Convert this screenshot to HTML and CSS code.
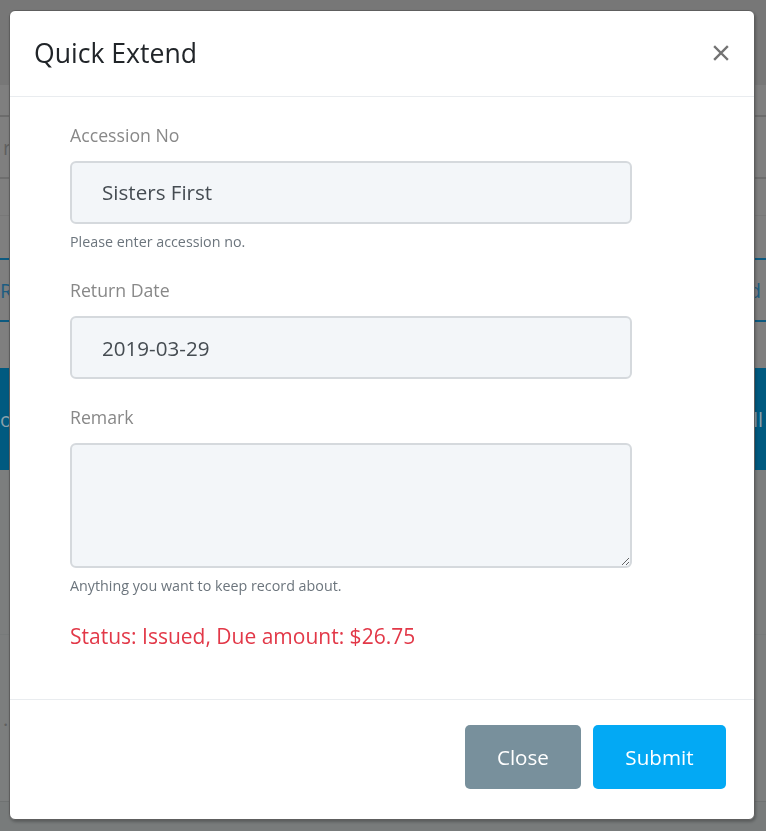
FILE: index.html
```html
<!DOCTYPE html>
<html lang="en">
<head>
<meta charset="utf-8">
<title>Quick Extend</title>
<link rel="stylesheet" href="styles.css">
</head>
<body>
<div class="backdrop">
  <div class="bd-nav"></div>
  <div class="bd-row bd-r1"></div>
  <div class="bd-row bd-r2"><span class="bd-txt">r</span></div>
  <div class="bd-row bd-r3"></div>
  <div class="bd-gap bd-g1"></div>
  <div class="bd-tabs"><span>Re</span><span>d</span></div>
  <div class="bd-gap bd-g2"></div>
  <div class="bd-bar"><span>o</span><span>ll</span></div>
  <div class="bd-gap bd-g3"></div>
  <div class="bd-row bd-r4"><span class="bd-txt">.</span></div>
  <div class="bd-foot"></div>
</div>

<div class="modal" role="dialog" aria-labelledby="modal-title">
  <div class="modal-header">
    <h5 class="modal-title" id="modal-title">Quick Extend</h5>
    <button class="close-x" type="button" aria-label="Close">
      <svg width="16" height="16" viewBox="0 0 16 16"><path d="M2 2 L14 14 M14 2 L2 14" stroke="#737373" stroke-width="2.4" stroke-linecap="square" fill="none"/></svg>
    </button>
  </div>
  <div class="modal-body">
    <div class="field">
      <label class="field-label" for="acc">Accession No</label>
      <input class="field-input" id="acc" type="text" value="Sisters First">
      <small class="field-help">Please enter accession no.</small>
    </div>
    <div class="field">
      <label class="field-label" for="ret">Return Date</label>
      <input class="field-input" id="ret" type="text" value="2019-03-29">
    </div>
    <div class="field">
      <label class="field-label" for="rem">Remark</label>
      <textarea class="field-input field-area" id="rem"></textarea>
      <small class="field-help">Anything you want to keep record about.</small>
    </div>
    <p class="status">Status: Issued, Due amount: $26.75</p>
  </div>
  <div class="modal-footer">
    <button class="btn btn-close" type="button">Close</button>
    <button class="btn btn-submit" type="button">Submit</button>
  </div>
</div>
</body>
</html>
```

FILE: styles.css
```css
* { box-sizing: border-box; }

html, body {
  margin: 0;
  padding: 0;
  height: 100%;
}

body {
  font-family: "Open Sans", "Noto Sans", sans-serif;
  background: #7f7f7f;
  overflow: hidden;
}

/* ---------- dimmed page behind the dialog ---------- */
.backdrop {
  display: flex;
  flex-direction: column;
  height: 831px;
  font-size: 20px;
}
.bd-nav { height: 85px; background: #777777; }
.bd-row { display: flex; justify-content: space-between; align-items: center; padding: 0 3px; }
.bd-r1 { height: 32px; border-bottom: 2px solid #6c6c6c; }
.bd-r2 { height: 62px; border-bottom: 2px solid #6e6e6e; }
.bd-r3 { height: 37px; border-bottom: 1px solid #787878; }
.bd-txt { color: #5f5f5f; }
.bd-g1 { height: 42px; }
.bd-tabs {
  height: 64px;
  display: flex;
  justify-content: space-between;
  align-items: center;
  padding: 0 5px 0 0;
  border-top: 2px solid #0c5a80;
  border-bottom: 2px solid #0c5a80;
  color: #1d5d82;
}
.bd-g2 { height: 46px; }
.bd-bar {
  height: 102px;
  background: #005a80;
  display: flex;
  justify-content: space-between;
  align-items: center;
  padding: 0 3px 0 0;
  color: #8aa0ab;
}
.bd-g3 { height: 165px; background: #7c7e7e; border-bottom: 1px solid #777a7a; }
.bd-r4 { height: 167px; background: #7c7e7e; border-bottom: 1px solid #6f7272; }
.bd-foot { flex: 1; background: #787b7b; }

/* ---------- dialog ---------- */
.modal {
  position: fixed;
  left: 9px;
  top: 10px;
  width: 746px;
  height: 810px;
  display: flex;
  flex-direction: column;
  background: #ffffff;
  border: 1px solid #5e5e5e;
  border-radius: 6px;
  box-shadow: 1px 2px 3px rgba(0, 0, 0, 0.25);
}

.modal-header {
  display: flex;
  justify-content: space-between;
  align-items: center;
  padding: 27px 25px 26px 24px;
  border-bottom: 1px solid #e9ecef;
}

.modal-title {
  margin: 0;
  font-size: 26.6px;
  line-height: 1.2;
  font-weight: 400;
  color: #212529;
}

.close-x {
  display: block;
  width: 16px;
  height: 16px;
  margin-top: -1px;
  padding: 0;
  border: 0;
  background: none;
  cursor: pointer;
}
.close-x svg { display: block; }

.modal-body {
  flex: 1;
  padding: 25px 122px 0 60px;
}

.field { margin-bottom: 25px; }

.field-label {
  display: block;
  font-size: 17.7px;
  line-height: 26.5px;
  color: #888888;
  margin-bottom: 12.5px;
}

.field-input {
  display: block;
  width: 100%;
  height: 63px;
  padding: 0 30px;
  border: 2px solid #d5d9dd;
  border-radius: 6px;
  background: #f3f6f9;
  font-family: "Open Sans", "Noto Sans", sans-serif;
  font-size: 20.6px;
  color: #454c52;
  outline: none;
}

.field-area {
  height: 125px;
  padding: 12px 30px;
  resize: vertical;
}

.field-help {
  display: block;
  margin-top: 6.7px;
  font-size: 14.3px;
  line-height: 21.45px;
  color: #6c757d;
}

.status {
  margin: 0;
  font-size: 21px;
  line-height: 30.9px;
  color: #e23848;
}

.modal-footer {
  display: flex;
  justify-content: flex-end;
  gap: 12px;
  padding: 25px 28px 30px;
  border-top: 1px solid #e9ecef;
}

.btn {
  height: 64px;
  padding: 0 32px;
  border: 0;
  border-radius: 5px;
  font-family: "Open Sans", "Noto Sans", sans-serif;
  font-size: 20.6px;
  color: #ffffff;
  cursor: pointer;
}
.btn-close { background: #78909c; }
.btn-submit { background: #03a9f4; padding: 0 32.5px; }
```
